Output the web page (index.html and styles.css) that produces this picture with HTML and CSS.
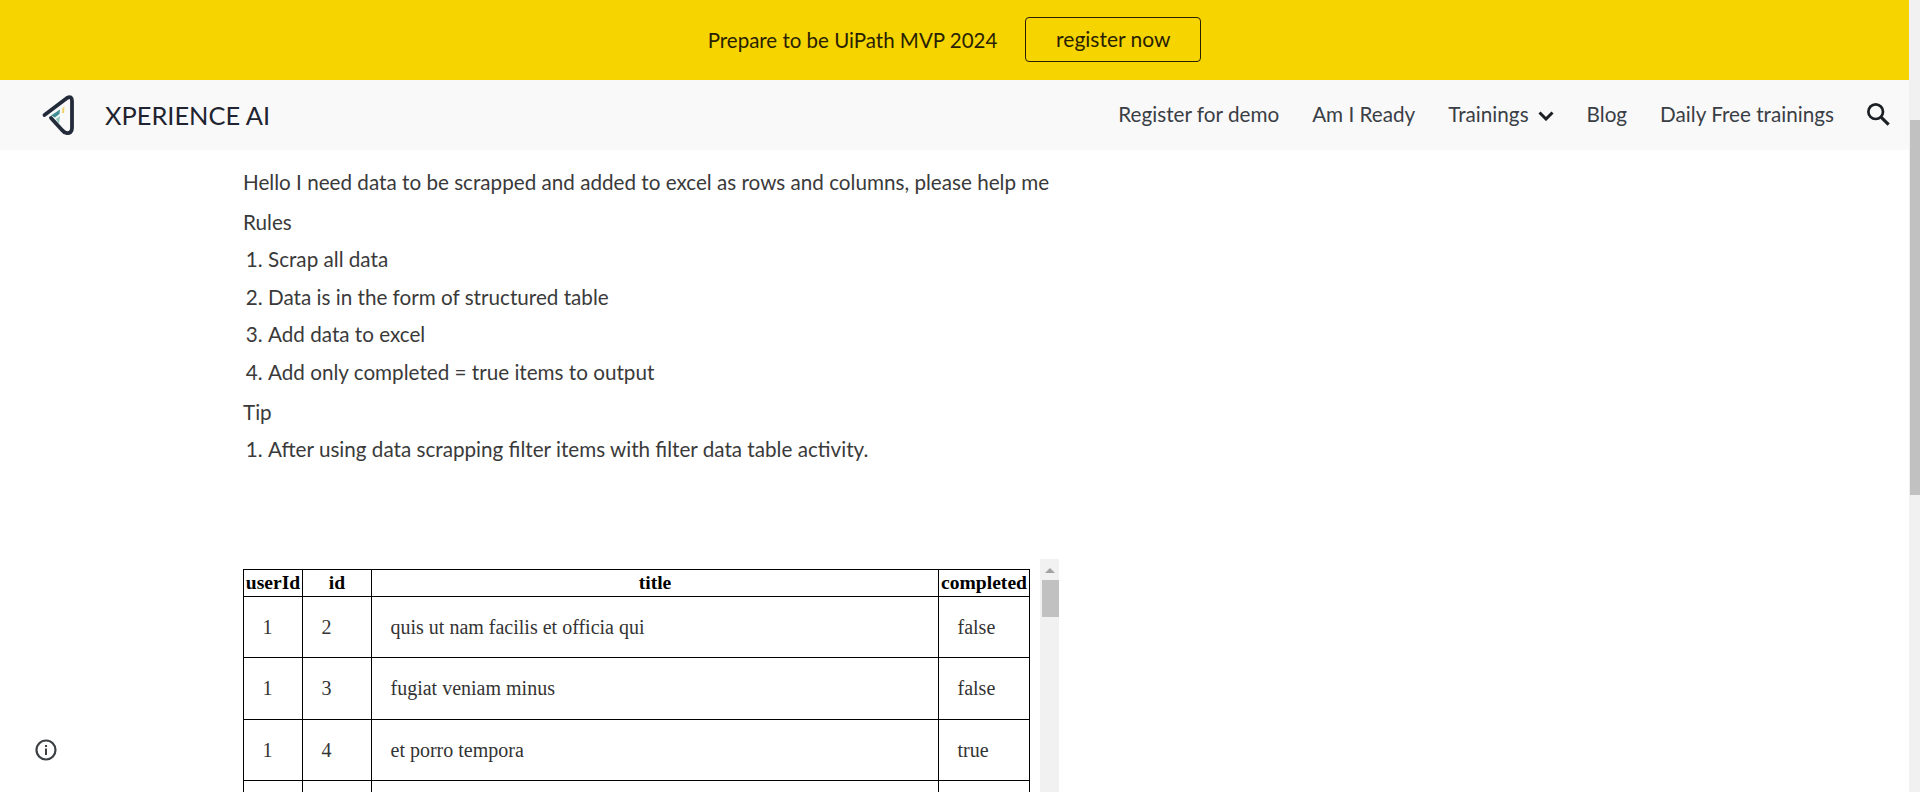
FILE: index.html
```html
<!DOCTYPE html>
<html lang="en">
<head>
    <meta charset="UTF-8">
    <meta name="viewport" content="width=device-width, initial-scale=1.0">
    <title>XPERIENCE AI</title>
    <link rel="stylesheet" href="styles.css">
</head>
<body>
    <div class="page">
        <div class="banner">
            <span class="banner-text">Prepare to be UiPath MVP 2024</span>
            <a class="banner-button">register now</a>
        </div>
        <header class="topbar">
            <svg class="logo" viewBox="0 0 36 42" aria-hidden="true">
                <path d="M3.5 21 L26 4 Q31 1.5 31 7 V34 Q31 39.5 25.5 39 Q23 38.5 21 36 L10 24" fill="none" stroke="#232b3a" stroke-width="3.8" stroke-linecap="round" stroke-linejoin="round"/>
                <path d="M10 21.5 L19 15.5 L18.5 20 L14 23.5 Z" fill="#3f8f92"/>
                <path d="M15 25 L19 22 L18 30 Z" fill="#8fc7bb"/>
                <path d="M21.5 14 L23.5 12.5 L23 19 L21 19 Z" fill="#efd267"/>
            </svg>
            <span class="brand">XPERIENCE AI</span>
            <nav class="nav">
                <a>Register for demo</a>
                <a>Am I Ready</a>
                <a class="nav-drop">Trainings
                    <svg class="chevron" viewBox="4 7 16 10" aria-hidden="true"><path d="M5.5 8.5 L12 15 L18.5 8.5" fill="none" stroke="#1b1f24" stroke-width="3"/></svg>
                </a>
                <a>Blog</a>
                <a>Daily Free trainings</a>
            </nav>
            <svg class="search" viewBox="0 0 24 24" aria-hidden="true">
                <circle cx="9.5" cy="9.5" r="6.5" fill="none" stroke="#1b1f24" stroke-width="2.4"/>
                <path d="M14.5 14.5 L21 21" stroke="#1b1f24" stroke-width="2.8"/>
            </svg>
        </header>

        <main class="content">
            <p>Hello I need data to be scrapped and added to excel as rows and columns, please help me</p>
            <p class="label">Rules</p>
            <ol class="steps">
                <li>Scrap all data</li>
                <li>Data is in the form of structured table</li>
                <li>Add data to excel</li>
                <li>Add only completed = true items to output</li>
            </ol>
            <p class="label">Tip</p>
            <ol class="steps">
                <li>After using data scrapping filter items with filter data table activity.</li>
            </ol>

            <div class="frame">
                <div class="frame-inner">
                    <table>
                        <thead>
                            <tr>
                                <th class="col-user">userId</th>
                                <th class="col-id">id</th>
                                <th class="col-title">title</th>
                                <th class="col-done">completed</th>
                            </tr>
                        </thead>
                        <tbody>
                            <tr>
                                <td>1</td>
                                <td>2</td>
                                <td>quis ut nam facilis et officia qui</td>
                                <td>false</td>
                            </tr>
                            <tr>
                                <td>1</td>
                                <td>3</td>
                                <td>fugiat veniam minus</td>
                                <td>false</td>
                            </tr>
                            <tr>
                                <td>1</td>
                                <td>4</td>
                                <td>et porro tempora</td>
                                <td>true</td>
                            </tr>
                            <tr>
                                <td></td>
                                <td></td>
                                <td></td>
                                <td></td>
                            </tr>
                        </tbody>
                    </table>
                </div>
                <div class="frame-scroll">
                    <span class="frame-arrow"></span>
                    <span class="frame-thumb"></span>
                </div>
            </div>
        </main>
    </div>

    <div class="page-scroll"><span class="page-thumb"></span></div>

    <svg class="info" viewBox="0 0 24 24" aria-hidden="true">
        <circle cx="12" cy="12" r="9.5" fill="none" stroke="#3c4043" stroke-width="2.2"/>
        <rect x="11" y="10.5" width="2" height="6.5" fill="#3c4043"/>
        <rect x="11" y="7" width="2" height="2" fill="#3c4043"/>
    </svg>
</body>
</html>
```

FILE: styles.css
```css
html, body {
    height: 100%;
    margin: 0;
    overflow: hidden;
    background-color: #fff;
}
body {
    font-family: "Lato", "Open Sans", sans-serif;
    color: #212121;
}
.page {
    width: 1909px;
    height: 792px;
    overflow: hidden;
}

/* yellow strip */
.banner {
    height: 80px;
    background-color: #f5d400;
    display: flex;
    align-items: center;
    justify-content: center;
    gap: 28px;
    font-size: 20.5px;
    color: #2a1f00;
    padding-bottom: 1px;
    box-sizing: border-box;
}
.banner-button {
    width: 176px;
    height: 45px;
    box-sizing: border-box;
    border: 1px solid #2a1f00;
    border-radius: 4px;
    font-size: 21px;
    display: flex;
    align-items: center;
    justify-content: center;
    padding-bottom: 2px;
}

.topbar {
    height: 70px;
    background-color: #f9f9fa;
    display: flex;
    align-items: center;
    padding: 0 17px 0 41px;
    box-sizing: border-box;
}
.logo {
    width: 36px;
    height: 42px;
}
.brand {
    margin-left: 28px;
    font-size: 25.4px;
    color: #1f2430;
}
.nav {
    margin-left: auto;
    display: flex;
    align-items: center;
    gap: 33px;
    font-size: 20.7px;
    color: #3a3e45;
    padding-bottom: 2px;
}
.nav-drop {
    display: flex;
    align-items: center;
    gap: 9px;
}
.chevron {
    width: 16px;
    height: 10px;
    margin-top: 3px;
}
.search {
    width: 27px;
    height: 27px;
    margin-left: 31px;
    margin-bottom: 2px;
}

.content {
    padding: 17px 0 0 243px;
    font-size: 20.66px;
    line-height: 30px;
    color: #3a3a3a;
}
.content p {
    margin: 0;
}
.content .label {
    margin-top: 10px;
}
.steps {
    margin: 7px 0 0;
    padding: 0 0 0 25px;
}
.steps li {
    margin-bottom: 7.5px;
}
.steps li:last-child {
    margin-bottom: 0;
}
.steps + .label {
    margin-top: 10px;
}

/* embedded table and its scrollbar */
.frame {
    margin-top: 95px;
    display: flex;
    height: 240px;
    width: 816px;
}
.frame-inner {
    padding-top: 10px;
    width: 797px;
}
table {
    width: 787px;
    border-collapse: collapse;
    table-layout: fixed;
    font-family: "Liberation Serif", serif;
    font-size: 20px;
    line-height: 22px;
    color: #333;
}
th, td {
    border: 1px solid #000;
    padding: 0;
}
th {
    height: 26px;
    font-size: 19.6px;
    font-weight: bold;
    color: #000;
    text-align: center;
}
td {
    height: 60.5px;
    padding-left: 18.5px;
}
.col-user { width: 58px; }
.col-id { width: 68px; }
.col-done { width: 90px; }
.frame-scroll {
    width: 19px;
    background-color: #f1f1f1;
    display: flex;
    flex-direction: column;
    align-items: center;
}
.frame-arrow {
    margin-top: 9px;
    margin-bottom: 7px;
    border-left: 5px solid transparent;
    border-right: 5px solid transparent;
    border-bottom: 5px solid #a3a3a3;
}
.frame-thumb {
    width: 17px;
    height: 37px;
    margin-left: 2px;
    background-color: #c1c1c1;
}

.page-scroll {
    position: fixed;
    top: 0;
    right: 0;
    bottom: 0;
    width: 11px;
    background-color: #f1f1f1;
}
.page-thumb {
    position: absolute;
    top: 120px;
    left: 1px;
    right: 0;
    height: 375px;
    background-color: #c1c1c1;
}
.info {
    position: fixed;
    left: 34px;
    top: 738px;
    width: 24px;
    height: 24px;
}
```
